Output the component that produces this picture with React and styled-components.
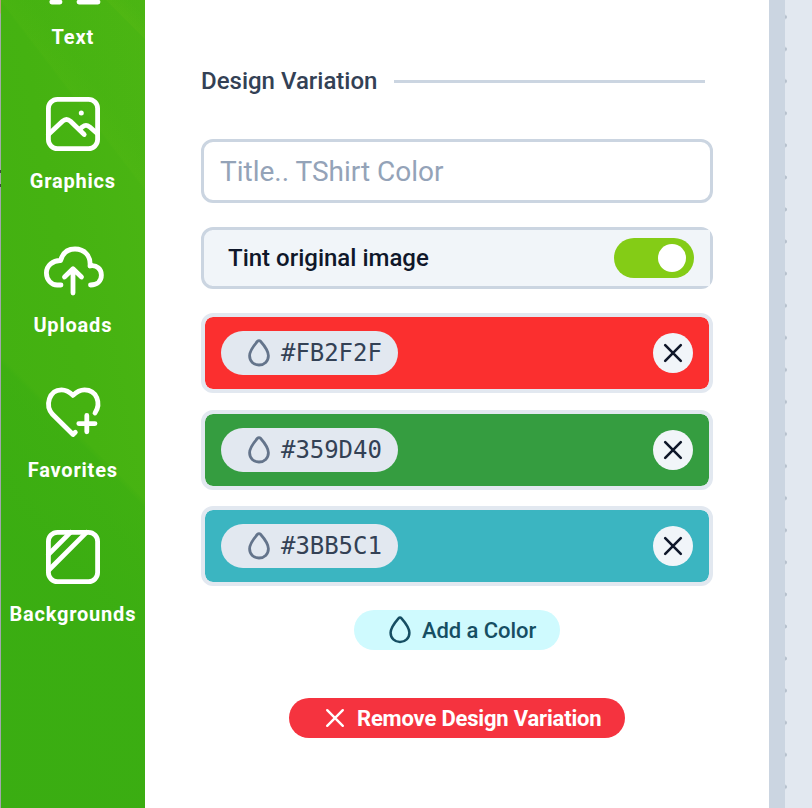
import React from "react";
import styled, { createGlobalStyle } from "styled-components";

const GlobalStyle = createGlobalStyle`
  * { box-sizing: border-box; }
  html, body { margin: 0; padding: 0; overflow: hidden; background: #fff; }
  body { font-family: Roboto, "Liberation Sans", sans-serif; }
  button { font-family: inherit; border: 0; padding: 0; cursor: pointer; }
`;

const Page = styled.div`
  display: grid;
  grid-template-columns: 1px 144px 624px 16px 1fr;
  width: 812px;
  height: 808px;
  overflow: hidden;
`;

const PageEdge = styled.div`
  background: linear-gradient(
    #b7a07c 0 13px, #a3aba6 14px 170px, #3f4a42 170px 173px, #a3aba6 173px 184px,
    #3f4a42 184px 187px, #a3a6ab 187px 100%
  );
`;

const Rail = styled.nav`
  display: flex;
  flex-direction: column;
  height: 808px;
  overflow: hidden;
  background:
    linear-gradient(45deg, transparent 645px, rgba(100, 190, 20, 0.22) 646px, rgba(90, 185, 20, 0) 662px),
    linear-gradient(52.6deg, transparent 489px, rgba(95, 190, 20, 0.14) 491px, rgba(80, 182, 18, 0.04) 515px),
    linear-gradient(45deg, rgba(58, 173, 18, 0.95) 0, rgba(58, 173, 18, 0.9) 200px, rgba(58, 173, 18, 0.55) 314px, transparent 320px),
    linear-gradient(80deg, #41b012 0%, #45b211 55%, #4bb513 100%);
`;

const RailItem = styled.a`
  display: flex;
  flex-direction: column;
  align-items: center;
  flex: none;
  height: 144.25px;
  color: #fff;
  margin-top: ${(p) => (p.$first ? "-92px" : "0")};
`;

const RailIcon = styled.svg`
  display: block;
  flex: none;
  width: 72px;
  height: 72px;
  margin-top: 36px;
  fill: none;
  stroke: #fff;
  stroke-width: 4.8;
  stroke-linecap: round;
  stroke-linejoin: round;
`;

const RailLabel = styled.span`
  font-size: 20px;
  line-height: 24px;
  margin-top: 8.8px;
  font-weight: 700;
  letter-spacing: 0.8px;
  margin-right: 0.4px;
  white-space: nowrap;
`;

const Panel = styled.main`
  display: flex;
  flex-direction: column;
  background: #fff;
  padding: 65px 56px 0;
`;

const Heading = styled.div`
  display: flex;
  align-items: center;
  gap: 17px;
  height: 32px;
  padding-right: 8px;
  color: #334155;
  font-size: 24px;
  font-weight: 500;
  white-space: nowrap;
`;

const Rule = styled.span`
  flex: 1;
  height: 3px;
  background: #cbd5e1;
`;

const TitleInput = styled.input`
  display: block;
  width: 100%;
  height: 64px;
  margin-top: 42px;
  padding: 0 16px;
  border: 3px solid #cbd5e1;
  border-radius: 12px;
  background: #fff;
  outline: 0;
  font: 400 28px Roboto, sans-serif;
  color: #334155;
  &::placeholder { color: #94a3b8; opacity: 1; }
`;

const TintRow = styled.label`
  display: flex;
  height: 62px;
  margin-top: 24px;
  border: 3px solid #cbd5e1;
  border-radius: 12px;
  background: #f1f5f9;
  color: #0f172a;
  font-size: 24px;
  font-weight: 500;
`;

const TintContent = styled.span`
  display: flex;
  flex: 1;
  align-items: center;
  justify-content: space-between;
  padding: 0 16px;
  margin-left: 8px;
  background: #f1f5f9;
`;

const Toggle = styled.span`
  display: flex;
  justify-content: flex-end;
  align-items: center;
  width: 80px;
  height: 40px;
  padding: 0 8px;
  border-radius: 20px;
  background: #84cc16;
`;

const Knob = styled.span`
  width: 28px;
  height: 28px;
  border-radius: 50%;
  background: #fff;
`;

const Swatches = styled.div`
  display: flex;
  flex-direction: column;
  gap: 16.5px;
  margin-top: 24px;
`;

const Swatch = styled.div`
  display: flex;
  align-items: center;
  justify-content: space-between;
  height: 80px;
  padding: 0 16px;
  border: 4px solid #e2e8f0;
  border-radius: 12px;
  background: ${(p) => p.$color};
  background-clip: padding-box;
`;

const HexPill = styled.button`
  display: flex;
  align-items: center;
  width: 177px;
  height: 44px;
  padding-left: 24px;
  border-radius: 22px;
  background: #e2e8f0;
  color: #334155;
`;

const HexText = styled.span`
  margin-left: 8px;
  font-family: "DejaVu Sans Mono", monospace;
  font-size: 24px;
  line-height: 32px;
  letter-spacing: -0.05px;
`;

const Clear = styled.button`
  display: grid;
  place-items: center;
  width: 40px;
  height: 40px;
  border-radius: 50%;
  background: #f1f5f9;
  color: #0f172a;
`;

const Glyph = styled.svg`
  display: block;
  flex: none;
  width: 28px;
  height: 28px;
  fill: none;
  stroke: ${(p) => p.$color || "currentColor"};
  stroke-width: ${(p) => p.$weight};
  stroke-linecap: round;
  stroke-linejoin: round;
`;

const ActionButton = styled.button`
  display: flex;
  align-items: center;
  align-self: center;
  width: ${(p) => p.$width}px;
  height: 40px;
  margin-top: ${(p) => p.$gap}px;
  padding-left: 32px;
  border-radius: 20px;
  background: ${(p) => (p.$danger ? "#f5333f" : "#cffafe")};
  color: ${(p) => (p.$danger ? "#fff" : "#164e63")};
  font-size: 22px;
  font-weight: ${(p) => (p.$danger ? 700 : 500)};
  letter-spacing: ${(p) => (p.$danger ? "-0.18px" : "-0.06px")};
  white-space: nowrap;
  gap: 8px;
`;

const Divider = styled.div`
  background: #cbd5e1;
`;

const Canvas = styled.div`
  background-color: #e2e8f0;
  background-image: radial-gradient(circle at 0 16px, #b7c1cd 0, #b7c1cd 1.6px, transparent 2.3px);
  background-size: 40px 32.08px;
  background-repeat: repeat-y;
  background-position: 0 1px;
`;

const Drop = ({ weight = 2.8, color }) => (
  <Glyph $weight={weight} $color={color} viewBox="0 0 28 28">
    <path d="M12.5 2.3 C8.8 6.5 4.6 12 4.6 16.8 C4.6 22.2 8.7 26 14 26 S23.4 22.2 23.4 16.8 C23.4 12 19.2 6.5 15.5 2.3 C14.6 1.3 13.4 1.3 12.5 2.3Z" />
  </Glyph>
);

const Cross = ({ weight = 2.6 }) => (
  <Glyph $weight={weight} viewBox="0 0 28 28">
    <path d="M6.2 6.2 L21.8 21.8 M21.8 6.2 L6.2 21.8" />
  </Glyph>
);

const icons = {
  Text: <path d="M14.8 58.1H23M42 58.1H61" />,
  Graphics: (
    <>
      <rect x="11.4" y="11.4" width="49.2" height="49.2" rx="9" />
      <path d="M11.4 46.5 L25.5 33.2 Q29.5 29.6 33.5 33.2 L47.2 46.5" />
      <path d="M42.5 41.5 L45.5 38.8 Q49 36 52.5 38.8 L60.5 45.8" />
      <circle cx="44.3" cy="25" r="2.5" fill="#fff" stroke="none" />
    </>
  ),
  Uploads: (
    <>
      <path d="M24 52 H20.5 A10.8 12 0 0 1 9.4 40 C9.4 32.5 16 27.3 23.6 27.5 C25.8 19.5 31 16 38 16 C47.5 16 54 23 53 33 C60 31.5 64.4 36.5 64.4 42 C64.4 48 60.2 52 53.5 52" />
      <path d="M36 60 V36 M27.5 44 L36 35.7 L44.5 44" />
    </>
  ),
  Favorites: (
    <>
      <path d="M38.3 55.2 L36 57.5 L15.5 37.3 C7.8 28.8 12 12.8 24.5 12.8 C29.5 12.8 32.5 14.8 36 18.4 C39.5 14.8 42.5 12.8 47.5 12.8 C60 12.8 64.4 26.5 58 36" />
      <path d="M49.8 38.4 V54.8 M41.8 46.6 H58" />
    </>
  ),
  Backgrounds: (
    <>
      <rect x="11.4" y="11.4" width="49.2" height="49.2" rx="9" />
      <path d="M11.4 33.5 L33.5 11.4 M11.4 49.5 L49.5 11.4" />
    </>
  ),
};

const colors = ["#FB2F2F", "#359D40", "#3BB5C1"];

export default function App() {
  return (
    <>
      <GlobalStyle />
      <Page>
        <PageEdge />
        <Rail>
          {Object.entries(icons).map(([name, drawing], i) => (
            <RailItem key={name} $first={i === 0}>
              <RailIcon viewBox="0 0 72 72">{drawing}</RailIcon>
              <RailLabel>{name}</RailLabel>
            </RailItem>
          ))}
        </Rail>
        <Panel>
          <Heading>
            <span>Design Variation</span>
            <Rule />
          </Heading>
          <TitleInput placeholder="Title.. TShirt Color" />
          <TintRow>
            <TintContent>
              <span>Tint original image</span>
              <Toggle>
                <Knob />
              </Toggle>
            </TintContent>
          </TintRow>
          <Swatches>
            {colors.map((c) => (
              <Swatch key={c} $color={c}>
                <HexPill>
                  <Drop color="#64748b" />
                  <HexText>{c}</HexText>
                </HexPill>
                <Clear aria-label="Remove color">
                  <Cross />
                </Clear>
              </Swatch>
            ))}
          </Swatches>
          <ActionButton $width={206} $gap={24}>
            <Drop weight={2.5} />
            Add a Color
          </ActionButton>
          <ActionButton $width={336} $gap={48} $danger>
            <Cross weight={2.4} />
            Remove Design Variation
          </ActionButton>
        </Panel>
        <Divider />
        <Canvas />
      </Page>
    </>
  );
}
